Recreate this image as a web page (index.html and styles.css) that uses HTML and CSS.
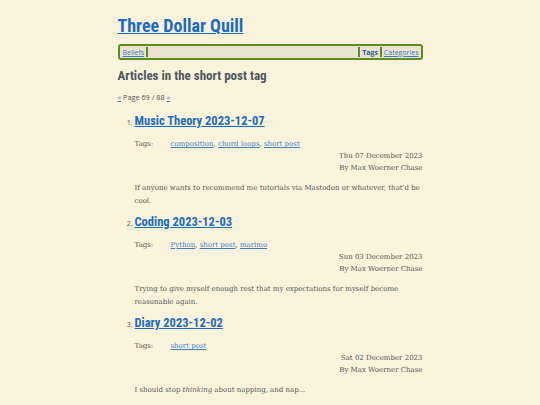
FILE: index.html
```html
<!DOCTYPE html>
<html>
<head>
<meta charset="utf-8">
<link rel="stylesheet" href="styles.css">
</head>
<body>
<div class="page">
  <h1 class="site-title"><a href="#">Three Dollar Quill</a></h1>
  <nav class="nav">
    <a href="#" class="nav-link">Beliefs</a>
    <span class="sep"></span>
    <span class="spacer"></span>
    <span class="sep"></span>
    <span class="nav-current">Tags</span>
    <span class="sep"></span>
    <a href="#" class="nav-link">Categories</a>
  </nav>
  <h2 class="page-heading">Articles in the short post tag</h2>
  <p class="pager"><a href="#">«</a> Page 69 / 88 <a href="#">»</a></p>
  <ol class="articles" start="1">
    <li class="article">
      <h3 class="article-title"><a href="#">Music Theory 2023-12-07</a></h3>
      <div class="tags"><span class="tags-label">Tags:</span><span class="tags-list"><a href="#">composition</a>, <a href="#">chord loops</a>, <a href="#">short post</a></span></div>
      <div class="meta">Thu 07 December 2023</div>
      <div class="meta">By Max Woerner Chase</div>
      <p class="summary">If anyone wants to recommend me tutorials via Mastodon or whatever, that'd be cool.</p>
    </li>
    <li class="article">
      <h3 class="article-title"><a href="#">Coding 2023-12-03</a></h3>
      <div class="tags"><span class="tags-label">Tags:</span><span class="tags-list"><a href="#">Python</a>, <a href="#">short post</a>, <a href="#">marimo</a></span></div>
      <div class="meta">Sun 03 December 2023</div>
      <div class="meta">By Max Woerner Chase</div>
      <p class="summary">Trying to give myself enough rest that my expectations for myself become reasonable again.</p>
    </li>
    <li class="article">
      <h3 class="article-title"><a href="#">Diary 2023-12-02</a></h3>
      <div class="tags"><span class="tags-label">Tags:</span><span class="tags-list"><a href="#">short post</a></span></div>
      <div class="meta">Sat 02 December 2023</div>
      <div class="meta">By Max Woerner Chase</div>
      <p class="summary">I should stop <em>thinking</em> about napping, and nap...</p>
    </li>
  </ol>
</div>
</body>
</html>
```

FILE: styles.css
```css
html, body {
  margin: 0;
  padding: 0;
  background: #fcf3dc;
}
body {
  font-family: "DejaVu Serif", "Liberation Serif", serif;
  color: #555;
}
.page {
  width: 305px;
  margin: 0 auto;
  padding-top: 13px;
}
.site-title {
  margin: 0;
  font-family: "Liberation Sans Narrow", "Roboto Condensed", "DejaVu Sans Condensed", Roboto, sans-serif;
  font-stretch: condensed;
  font-size: 18px;
  font-weight: 700;
  line-height: 25px;
}
.site-title a {
  color: #1b6cc0;
}
.nav {
  margin-top: 6px;
  display: flex;
  align-items: center;
  height: 12px;
  border: 2px solid #5d8d20;
  border-radius: 3px;
  background: #ebe3cf;
  font-family: "Open Sans", "Noto Sans", sans-serif;
  font-size: 7px;
  padding: 0 1px 0 2px;
}
.nav-link {
  color: #3c7ec4;
  padding: 0 1px;
}
.nav-current {
  color: #2a5f9a;
  font-weight: 700;
  padding: 0 1px;
}
.sep {
  width: 2px;
  height: 10px;
  background: #5d8d20;
  margin: 0 1px;
}
.spacer {
  flex: 1;
}
.page-heading {
  margin: 8px 0 0;
  font-family: "Liberation Sans Narrow", "Roboto Condensed", "DejaVu Sans Condensed", Roboto, sans-serif;
  font-stretch: condensed;
  font-size: 13px;
  font-weight: 700;
  color: #4d5860;
  line-height: 16px;
}
.pager {
  margin: 7px 0 0;
  font-family: "Open Sans", "Noto Sans", sans-serif;
  font-size: 7.3px;
  line-height: 12px;
  color: #555;
}
.pager a {
  color: #3c7ec4;
}
.articles {
  margin: 9px 0 0;
  padding-left: 17px;
  font-family: "Open Sans", "Noto Sans", sans-serif;
  font-size: 7px;
}
.article {
  margin-bottom: 5px;
}
.article-title {
  margin: 0;
  font-family: "Liberation Sans Narrow", "Roboto Condensed", "DejaVu Sans Condensed", Roboto, sans-serif;
  font-stretch: condensed;
  font-size: 12.5px;
  font-weight: 700;
  line-height: 18px;
}
.article-title a {
  color: #1b6cc0;
}
.tags {
  display: flex;
  margin-top: 8px;
  font-family: "DejaVu Serif", serif;
  font-size: 7px;
  line-height: 12px;
}
.tags-label {
  width: 36px;
}
.tags-list a {
  color: #3c7ec4;
}
.meta {
  text-align: right;
  font-family: "DejaVu Serif", serif;
  font-size: 7px;
  line-height: 12px;
}
.summary {
  margin: 8px 0 0;
  font-family: "DejaVu Serif", serif;
  font-size: 7px;
  line-height: 13px;
}
```
